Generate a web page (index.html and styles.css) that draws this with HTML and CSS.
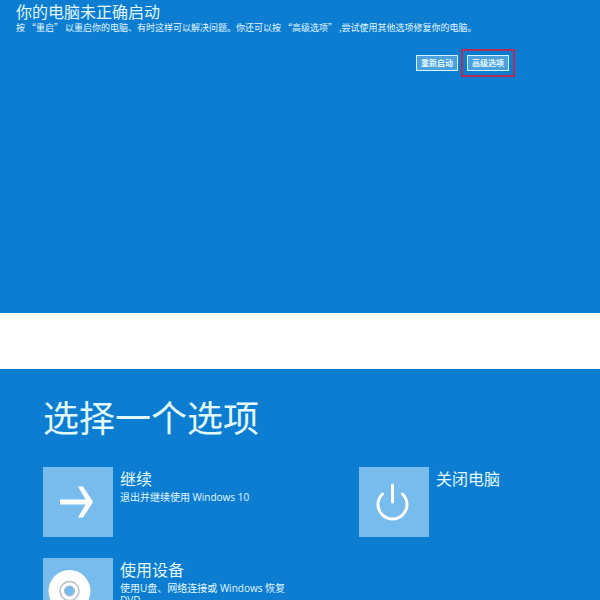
FILE: index.html
```html
<!DOCTYPE html>
<html lang="zh-CN">
<head>
    <meta charset="UTF-8">
    <title>你的电脑未正确启动</title>
    <meta name="viewport" content="width=device-width, initial-scale=1">
    <link rel="stylesheet" href="styles.css">
</head>
<body>
<section class="screen startup">
    <h1>你的电脑未正确启动</h1>
    <p>按 “重启” 以重启你的电脑、有时这样可以解决问题。你还可以按 “高级选项” ,尝试使用其他选项修复你的电脑。</p>
    <div class="actions">
        <button class="action" type="button">重新启动</button>
        <div class="highlight">
            <button class="action" type="button">高级选项</button>
        </div>
    </div>
</section>

<section class="screen choose">
    <h2>选择一个选项</h2>
    <div class="options">
        <button class="option" type="button">
            <svg class="tile" viewBox="0 0 70 70" aria-hidden="true">
                <path d="M17 35H46" fill="none" stroke="#fff" stroke-width="5"/>
                <path d="M35 19.5H40L49.5 34V36L40 50.5H35L44 35Z" fill="#fff"/>
            </svg>
            <span class="text">
                <span class="name">继续</span>
                <span class="detail">退出并继续使用 Windows 10</span>
            </span>
        </button>
        <button class="option" type="button">
            <svg class="tile" viewBox="0 0 70 70" aria-hidden="true">
                <path d="M23.5 27A14.5 14.5 0 1 0 43.5 27M33.5 18V35" fill="none" stroke="#fff" stroke-width="3" stroke-linecap="round"/>
            </svg>
            <span class="text">
                <span class="name">关闭电脑</span>
            </span>
        </button>
        <button class="option" type="button">
            <svg class="tile" viewBox="0 0 70 70" aria-hidden="true">
                <circle cx="26.5" cy="33" r="21" fill="#fff"/>
                <circle cx="26.5" cy="33" r="9.5" fill="#fff" stroke="#b5bfc4" stroke-width="1.5"/>
                <circle cx="26.5" cy="33" r="5" fill="#78bbed" stroke="#a5b5c0"/>
            </svg>
            <span class="text">
                <span class="name">使用设备</span>
                <span class="detail">使用U盘、网络连接或 Windows 恢复 DVD</span>
            </span>
        </button>
    </div>
</section>
</body>
</html>
```
FILE: styles.css
```css
* {
    box-sizing: border-box;
}

body {
    display: flex;
    flex-direction: column;
    gap: 56px;
    height: 100vh;
    margin: 0;
    overflow: hidden;
    background: #fff;
    font-family: "Open Sans", "Noto Sans CJK SC", sans-serif;
}

h1, h2, p {
    margin: 0;
    font-weight: 400;
}

button {
    padding: 0;
    color: inherit;
    font-family: inherit;
    cursor: pointer;
}

.screen {
    background: #0d7dd2;
    color: #e2f8ff;
}

.startup {
    flex: none;
    padding: 0 16px 236px;
}

.startup h1 {
    font-family: "Noto Sans CJK SC", sans-serif;
    font-size: 16px;
    line-height: 22px;
}

.startup p {
    font-family: "Noto Sans CJK SC", sans-serif;
    font-size: 9px;
    line-height: 12px;
}

.actions {
    display: flex;
    align-items: center;
    justify-content: flex-end;
    gap: 3px;
    padding: 15px 69px 0 0;
}

.action {
    display: block;
    width: 42px;
    height: 16px;
    border: 1px solid #d5f3ff;
    background: #4ba0df;
    font-size: 8px;
    font-weight: 700;
    line-height: 14px;
}

.highlight {
    padding: 4px;
    border: 2px solid #b32c56;
}

.choose {
    flex: 1;
    min-height: 0;
    padding: 24px 0 0 43px;
    overflow: hidden;
}

.choose h2 {
    font-size: 36px;
    line-height: 52px;
}

.options {
    display: grid;
    grid-template-columns: 316px 1fr;
    gap: 21px 0;
    padding-top: 22px;
}

.option {
    display: flex;
    align-items: flex-start;
    gap: 7px;
    border: 0;
    background: none;
    text-align: left;
}

.tile {
    flex: none;
    width: 70px;
    height: 70px;
    background: #78bbed;
}

.text {
    display: flex;
    flex-direction: column;
    max-width: 170px;
}

.name {
    font-size: 16px;
    line-height: 24px;
}

.detail {
    font-size: 10px;
    line-height: 12px;
}
```
